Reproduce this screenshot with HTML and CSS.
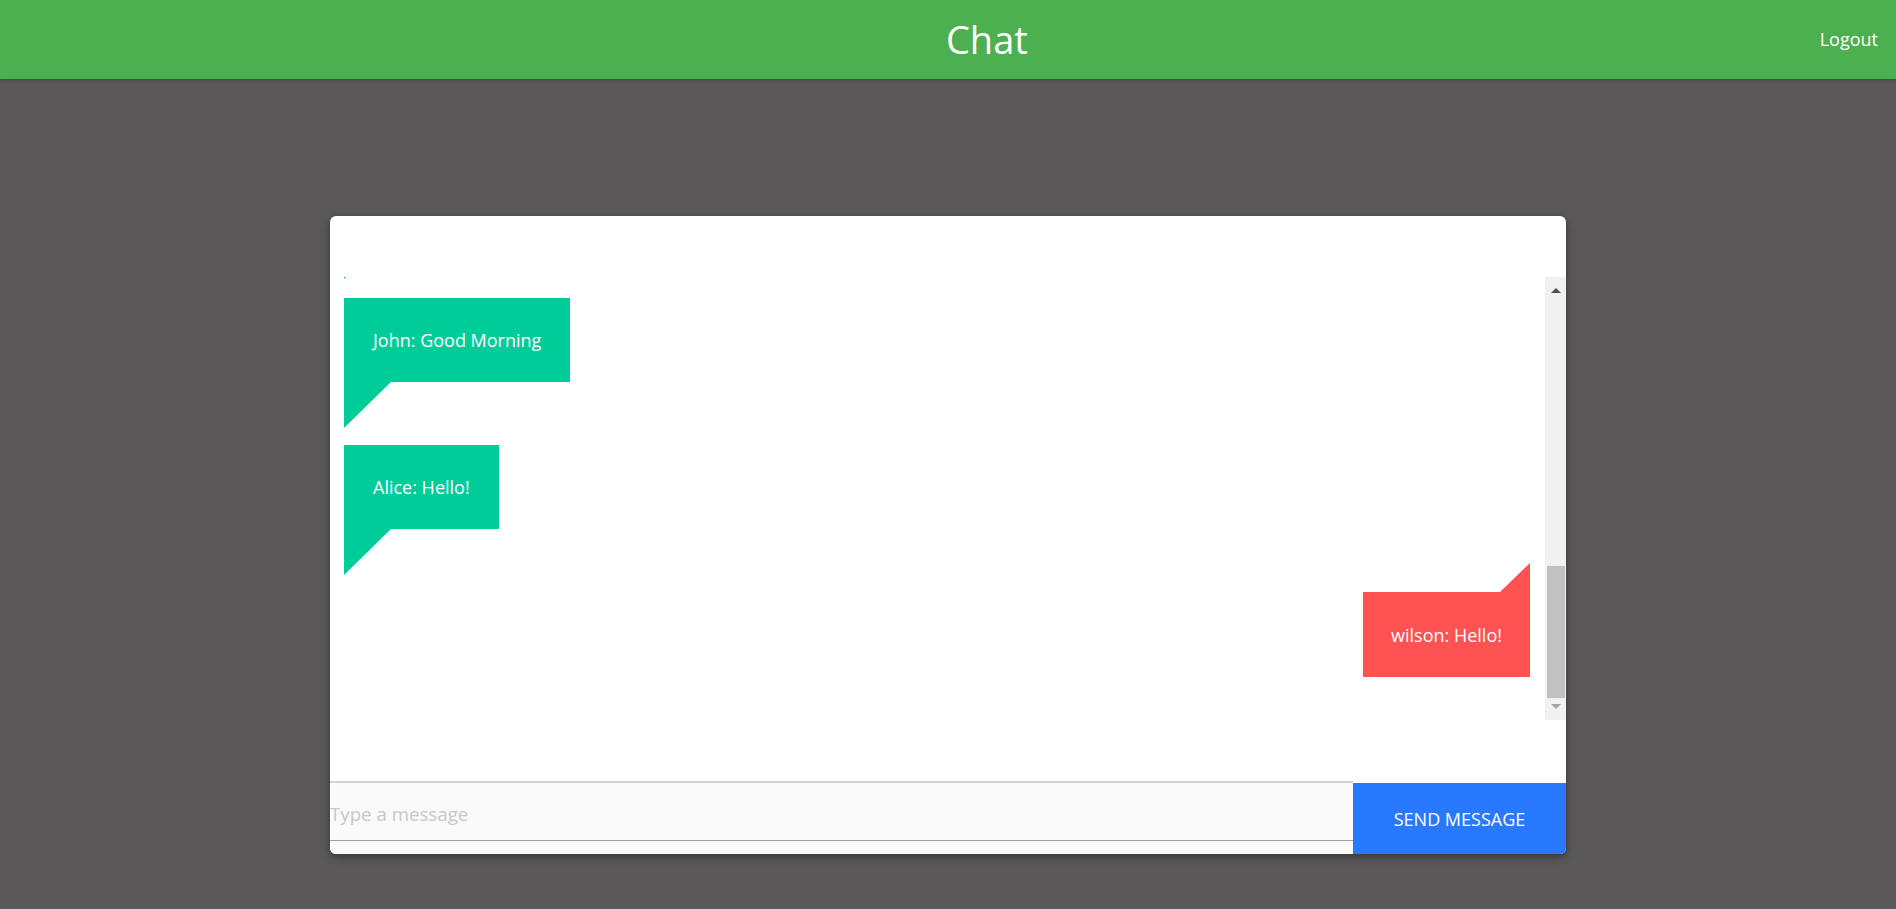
FILE: index.html
```html
<!DOCTYPE html>
<html lang="en">
<head>
<meta charset="utf-8">
<title>Chat</title>
<link rel="stylesheet" href="styles.css">
</head>
<body>
<header class="topbar">
  <div class="title">Chat</div>
  <a class="logout" href="#">Logout</a>
</header>
<main class="page">
  <section class="card">
    <div class="chat-area">
      <div class="messages">
        <div class="bubble left stub" aria-hidden="true"></div>
        <div class="bubble left">John: Good Morning</div>
        <div class="bubble left">Alice: Hello!</div>
        <div class="bubble right">wilson: Hello!</div>
      </div>
      <div class="scrollbar">
        <div class="sb-btn"><span class="arrow-up"></span></div>
        <div class="sb-track"><div class="sb-thumb"></div></div>
        <div class="sb-btn"><span class="arrow-down"></span></div>
      </div>
    </div>
    <div class="composer">
      <div class="input-wrap">
        <input class="msg-input" type="text" placeholder="Type a message">
      </div>
      <button class="send">SEND MESSAGE</button>
    </div>
  </section>
</main>
</body>
</html>
```

FILE: styles.css
```css
* { box-sizing: border-box; }

html, body {
  margin: 0;
  padding: 0;
}

body {
  background: #5a5858;
  font-family: "Open Sans", "Noto Sans", sans-serif;
  height: 909px;
  overflow: hidden;
}

.topbar {
  height: 79px;
  background: #4caf50;
  display: flex;
  align-items: center;
  box-shadow: 0 1px 3px rgba(0, 0, 0, 0.25);
  position: relative;
  z-index: 1;
}

.title {
  flex: 1;
  text-align: center;
  padding-left: 154px;
  color: #fff;
  font-size: 38px;
  line-height: 79px;
}

.logout {
  color: #fff;
  text-decoration: none;
  font-size: 18px;
  padding-right: 18px;
  margin-top: -2px;
}

.page {
  padding-top: 137px;
}

.card {
  width: 1236px;
  height: 638px;
  margin: 0 auto;
  background: #fff;
  border-radius: 6px;
  overflow: hidden;
  box-shadow: 0 3px 9px rgba(0, 0, 0, 0.4);
  display: flex;
  flex-direction: column;
  padding-top: 61px;
}

.chat-area {
  height: 443px;
  display: flex;
}

.messages {
  flex: 1;
  overflow: hidden;
  display: flex;
  flex-direction: column;
  justify-content: flex-end;
  align-items: flex-start;
  gap: 63px;
  padding: 0 15px 43px 14px;
}

.bubble {
  position: relative;
  color: #fff;
  font-size: 18px;
  line-height: 26px;
  padding: 29px 29px;
  flex-shrink: 0;
}

.bubble.stub {
  width: 150px;
  height: 84px;
  margin-bottom: 2px;
}

.bubble.stub::after {
  height: 44px;
  width: 45px;
}

.bubble.left {
  background: #00cc99;
}

.bubble.left::after {
  content: "";
  position: absolute;
  top: 100%;
  left: 0;
  width: 47px;
  height: 46px;
  background: #00cc99;
  clip-path: polygon(0 0, 100% 0, 0 100%);
}

.bubble.right {
  align-self: flex-end;
  background: #ff5252;
  padding: 30px 28px 29px 28px;
}

.bubble.right::before {
  content: "";
  position: absolute;
  bottom: 100%;
  right: 0;
  width: 30px;
  height: 29px;
  background: #ff5252;
  clip-path: polygon(100% 0, 100% 100%, 0 100%);
}

.scrollbar {
  width: 21px;
  background: #f1f1f1;
  display: flex;
  flex-direction: column;
}

.sb-btn {
  height: 22px;
  display: flex;
  align-items: center;
  justify-content: center;
}

.arrow-up {
  width: 0;
  height: 0;
  border-left: 5px solid transparent;
  border-right: 5px solid transparent;
  border-bottom: 5px solid #505050;
  margin-top: 4px;
}

.arrow-down {
  width: 0;
  height: 0;
  border-left: 5px solid transparent;
  border-right: 5px solid transparent;
  border-top: 5px solid #a3a3a3;
  margin-top: -6px;
}

.sb-track {
  flex: 1;
  display: flex;
  flex-direction: column;
  justify-content: flex-end;
  padding: 0 1px 0 2px;
}

.sb-thumb {
  height: 132px;
  background: #c1c1c1;
}

.composer {
  margin-top: auto;
  height: 73px;
  display: flex;
  align-items: flex-end;
}

.input-wrap {
  flex: 1;
  height: 73px;
  background: #fafafa;
  border-top: 2px solid #d3d3d3;
  padding-bottom: 13px;
}

.msg-input {
  display: block;
  width: 100%;
  height: 58px;
  border: none;
  border-bottom: 1px solid #a0a0a0;
  background: transparent;
  outline: none;
  padding: 4px 0 0 0;
  font-family: "Open Sans", "Noto Sans", sans-serif;
  font-size: 18.7px;
  color: #333;
}

.msg-input::placeholder {
  color: #c8c8c8;
}

.send {
  width: 213px;
  height: 71px;
  border: none;
  background: #2979ff;
  color: #fff;
  font-family: "Open Sans", "Noto Sans", sans-serif;
  font-size: 18px;
  padding: 0;
  cursor: pointer;
}
```
